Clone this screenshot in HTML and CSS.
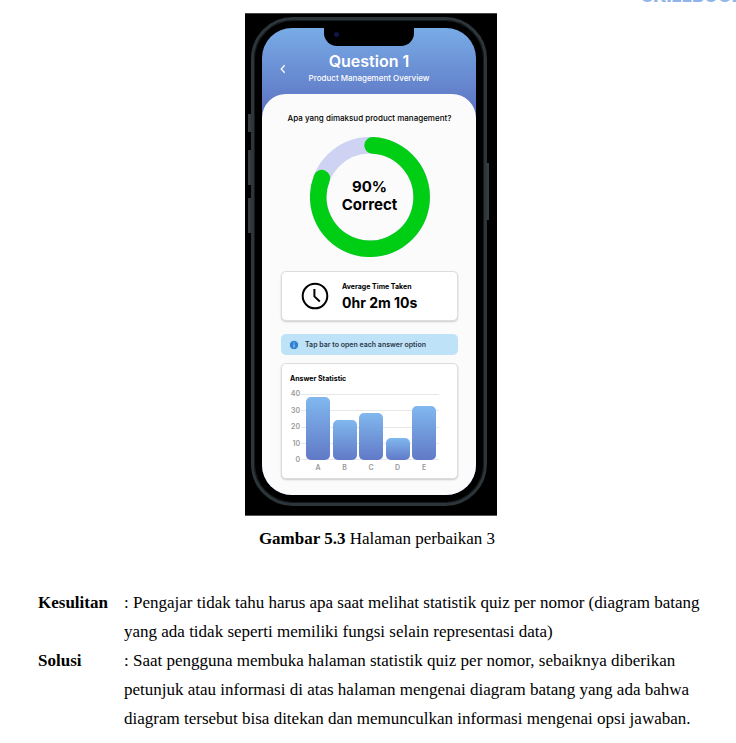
FILE: index.html
```html
<!DOCTYPE html>
<html lang="id">
<head>
<meta charset="utf-8">
<meta name="viewport" content="width=device-width, initial-scale=1">
<title>Halaman perbaikan 3</title>
<link rel="stylesheet" href="styles.css">
</head>
<body>
<header class="page-header"><span class="brand">SKILLBOOK</span></header>
<main class="document">
  <figure class="figure">
    <div class="backdrop">
      <div class="phone">
        <span class="side-button mute"></span>
        <span class="side-button volume-up"></span>
        <span class="side-button volume-down"></span>
        <span class="side-button power"></span>
        <div class="screen">
          <span class="notch"><span class="camera"></span></span>
          <div class="app-bar">
            <button class="back" type="button" aria-label="Kembali">
              <svg viewBox="0 0 6 10"><path d="M4.7 1.2 1.2 5l3.5 3.8"/></svg>
            </button>
            <div class="titles">
              <h1>Question 1</h1>
              <p>Product Management Overview</p>
            </div>
          </div>
          <div class="sheet">
            <p class="question">Apa yang dimaksud product management?</p>
            <div class="donut">
              <svg viewBox="0 0 120 120">
                <circle class="track" cx="60" cy="60" r="51.7"/>
                <path class="value" d="M62.6 8.4A51.7 51.7 0 1 1 11.8 41.2"/>
              </svg>
              <p>90%<br>Correct</p>
            </div>
            <section class="card time-card">
              <svg class="clock" viewBox="0 0 28 28"><circle cx="14" cy="14" r="12.3"/><path d="M13.4 7v7.4l5.4 5"/></svg>
              <div>
                <h2>Average Time Taken</h2>
                <p class="time">0hr 2m 10s</p>
              </div>
            </section>
            <p class="hint">
              <svg viewBox="0 0 10 10"><circle cx="5" cy="5" r="4.7"/><path d="M5 4.4v3M5 2.4v1"/></svg>
              Tap bar to open each answer option
            </p>
            <section class="card chart-card">
              <h2>Answer Statistic</h2>
              <div class="chart">
                <div class="scale"><span>40</span><span>30</span><span>20</span><span>10</span><span>0</span></div>
                <div class="plot">
                  <div class="lines"><i></i><i></i><i></i><i></i><i></i></div>
                  <div class="bars">
                    <button type="button" aria-label="A" style="height:96%"></button>
                    <button type="button" aria-label="B" style="height:60%"></button>
                    <button type="button" aria-label="C" style="height:71%"></button>
                    <button type="button" aria-label="D" style="height:33%"></button>
                    <button type="button" aria-label="E" style="height:82%"></button>
                  </div>
                </div>
                <div class="names"><span>A</span><span>B</span><span>C</span><span>D</span><span>E</span></div>
              </div>
            </section>
          </div>
        </div>
      </div>
    </div>
    <figcaption><b>Gambar 5.3</b> Halaman perbaikan 3</figcaption>
  </figure>
  <dl class="notes">
    <dt>Kesulitan</dt>
    <dd>: Pengajar tidak tahu harus apa saat melihat statistik quiz per nomor (diagram batang yang ada tidak seperti memiliki fungsi selain representasi data)</dd>
    <dt>Solusi</dt>
    <dd>: Saat pengguna membuka halaman statistik quiz per nomor, sebaiknya diberikan petunjuk atau informasi di atas halaman mengenai diagram batang yang ada bahwa diagram tersebut bisa ditekan dan memunculkan informasi mengenai opsi jawaban.</dd>
  </dl>
</main>
</body>
</html>
```
FILE: styles.css
```css
* { box-sizing: border-box; }
body, h1, h2, p, figure, dl, dd { margin: 0; }
body {
  background: #fff;
  color: #000;
  font-family: "Liberation Serif", serif;
  font-size: 17px;
}
button { border: 0; padding: 0; cursor: pointer; }

.page-header {
  display: flex;
  justify-content: flex-end;
  height: 13px;
  overflow: hidden;
}
.brand {
  margin: -14px -9px 0 0;
  color: #8fb4ea;
  font: 800 18px/20px Inter, sans-serif;
}

.document { padding: 0 32px 10px 38px; }
.figure { display: flex; flex-direction: column; align-items: center; }
.backdrop {
  width: 252px;
  padding: 3px 10px 9px 6px;
  background: #000;
  border-top: 1px solid #444;
  border-bottom: 1px solid #555;
}
.phone {
  position: relative;
  padding: 8px;
  border: 3px solid #2c3539;
  border-radius: 42px;
  background: #000;
  box-shadow: inset 0 0 0 1px #151a1c;
}
.side-button {
  position: absolute;
  left: -6px;
  width: 3px;
  background: #343c40;
}
.mute { top: 94px; height: 18px; }
.volume-up { top: 130px; height: 35px; }
.volume-down { top: 178px; height: 35px; }
.power { top: 143px; left: auto; right: -5px; height: 57px; }

.screen {
  position: relative;
  overflow: hidden;
  border-radius: 30px;
  background: linear-gradient(#78abe6, #5b70c0 90px);
  font-family: Inter, sans-serif;
}
.notch {
  position: absolute;
  top: 0;
  left: 62px;
  right: 62px;
  height: 18px;
  border-radius: 0 0 13px 13px;
  background: #000;
}
.camera {
  position: absolute;
  top: 4px;
  left: 10px;
  width: 5px;
  height: 5px;
  border-radius: 50%;
  background: #10154a;
}
.app-bar {
  position: relative;
  height: 66px;
  padding-top: 22px;
  color: #fff;
  text-align: center;
}
.back {
  position: absolute;
  top: 36px;
  left: 18px;
  width: 6px;
  height: 10px;
  background: none;
}
.back svg { display: block; fill: none; stroke: #fff; stroke-width: 1.3; }
.titles h1 { font-size: 16px; line-height: 22px; font-weight: 600; }
.titles p { font-size: 8px; line-height: 12px; font-weight: 500; }

.sheet {
  padding: 18px 18px 16px 19px;
  border-radius: 24px 24px 0 0;
  background: #fbfbfb;
}
.question { font-size: 8px; line-height: 12px; font-weight: 500; text-align: center; white-space: nowrap; }
.donut {
  display: grid;
  place-items: center;
  width: 120px;
  margin: 13px auto 14px;
}
.donut > * { grid-area: 1 / 1; }
.donut svg { width: 100%; fill: none; stroke-width: 16.6; stroke-linecap: round; }
.track { stroke: #ced3f3; }
.value { stroke: #00ce14; }
.donut p { padding-bottom: 2px; font-size: 15px; line-height: 18px; font-weight: 700; text-align: center; }

.card {
  border: 1px solid #ddd;
  border-radius: 5px;
  background: #fff;
  box-shadow: 0 1px 2px #0003;
}
.card h2 { font-size: 7px; line-height: 10px; font-weight: 700; }
.time-card {
  display: flex;
  align-items: center;
  gap: 13px;
  height: 50px;
  padding-left: 19px;
}
.clock { width: 28px; fill: none; stroke: #000; stroke-width: 2; }
.time-card > div { padding-top: 4px; }
.time { font-size: 14px; line-height: 22px; font-weight: 700; }
.hint {
  display: flex;
  align-items: center;
  gap: 6px;
  height: 21px;
  margin: 13px 0 8px;
  padding-left: 8px;
  border-radius: 5px;
  background: #bee3f8;
  color: #2d3748;
  font-size: 7px;
  font-weight: 600;
}
.hint svg { width: 10px; fill: #3182ce; stroke: #bee3f8; stroke-width: 1; }

.chart-card { padding: 10px 18px 5px 8px; }
.chart {
  display: grid;
  grid-template-columns: 10px 1fr;
  column-gap: 1px;
  margin-top: 5px;
  color: #999;
  font-size: 7px;
  line-height: 10px;
  font-weight: 600;
}
.scale { display: flex; flex-direction: column; justify-content: space-between; height: 76px; text-align: right; }
.plot { position: relative; margin: 5px 0; }
.lines { display: flex; flex-direction: column; justify-content: space-between; height: 100%; }
.lines i { height: 1px; background: #e8e8e8; }
.bars {
  position: absolute;
  inset: 0 3px 0 5px;
  display: flex;
  align-items: flex-end;
  justify-content: space-between;
}
.bars button {
  width: 24px;
  border-radius: 5px;
  background: linear-gradient(#80b8ee, #6179c7);
}
.names { grid-column: 2; display: flex; justify-content: space-between; margin-top: -2px; padding: 0 3px 0 5px; }
.names span { width: 24px; text-align: center; }

figcaption { margin-top: 13px; padding-left: 12px; line-height: 20px; }
.notes {
  display: grid;
  grid-template-columns: 86px 1fr;
  margin-top: 39px;
  line-height: 29px;
}
.notes dt { font-weight: 700; }
```
